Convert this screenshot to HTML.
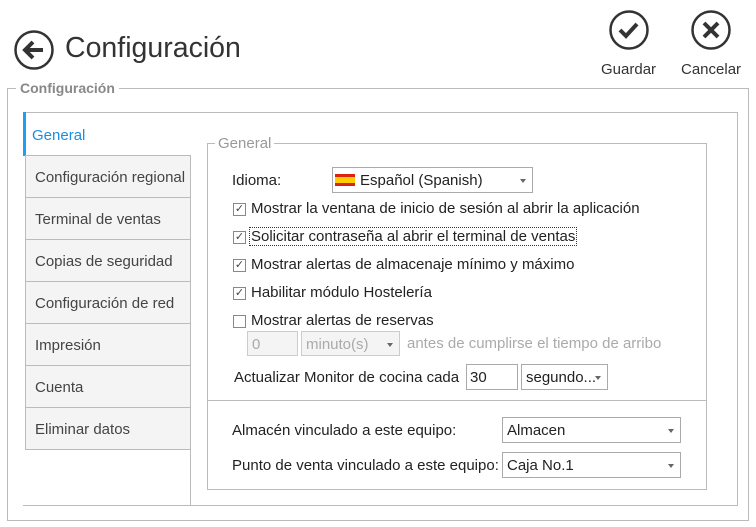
<!DOCTYPE html>
<html><head><meta charset="utf-8"><style>
*{box-sizing:border-box;margin:0;padding:0}
body{width:756px;height:527px;background:#fff;font-family:"Liberation Sans",sans-serif;color:#222;position:relative;overflow:hidden;font-size:15px}
.a{position:absolute}
.tab{position:absolute;left:25px;width:166px;height:43px;border:1px solid #bbb;background:#f4f4f4;color:#444;font-size:15px;padding:13px 0 0 9px;white-space:nowrap}
.cb{position:absolute;width:13px;height:13px;border:1px solid #888;background:#fff;font-size:11px;line-height:11px;text-align:center;color:#444}
.lbl{position:absolute;font-size:15px;white-space:nowrap;color:#222}
.sel{position:absolute;border:1px solid #aaa;background:#fff;height:26px;font-size:15px;padding:4px 0 0 4px;white-space:nowrap}
.sel:after{content:"";position:absolute;right:6px;top:11px;border-left:3px solid transparent;border-right:3px solid transparent;border-top:4px solid #666}
</style></head><body>
<svg class="a" style="left:13px;top:29px" width="42" height="42" viewBox="0 0 42 42"><circle cx="21" cy="21" r="18.5" fill="none" stroke="#333" stroke-width="2.5"/><path d="M30 21H12M20 13l-8 8 8 8" fill="none" stroke="#333" stroke-width="4"/></svg>
<div class="a" style="left:65px;top:32px;font-size:28.5px;color:#333">Configuración</div>
<svg class="a" style="left:608px;top:9px" width="42" height="42" viewBox="0 0 42 42"><circle cx="21" cy="21" r="18.5" fill="none" stroke="#333" stroke-width="2.5"/><path d="M12 21l6 6 11-12" fill="none" stroke="#333" stroke-width="4"/></svg>
<svg class="a" style="left:690px;top:9px" width="42" height="42" viewBox="0 0 42 42"><circle cx="21" cy="21" r="18.5" fill="none" stroke="#333" stroke-width="2.5"/><path d="M14 14l14 14M28 14L14 28" fill="none" stroke="#333" stroke-width="4"/></svg>
<div class="a" style="left:601px;top:61px;font-size:15px;color:#333">Guardar</div>
<div class="a" style="left:681px;top:61px;font-size:15px;color:#333">Cancelar</div>
<div class="a" style="left:7px;top:88px;width:742px;height:433px;border:1px solid #bbb"></div>
<div class="a" style="left:16px;top:80px;background:#fff;padding:0 4px;font-weight:bold;color:#888;font-size:14px">Configuración</div>
<div class="a" style="left:23px;top:112px;width:715px;height:394px;border:1px solid #bbb;border-left:none"></div>
<div class="a" style="left:23px;top:112px;width:3px;height:44px;background:#1ea0f0"></div>
<div class="a" style="left:32px;top:127px;color:#1a8fe0;font-size:15px">General</div>
<div class="a" style="left:190px;top:155px;width:1px;height:351px;background:#bbb"></div>
<div class="tab" style="top:155px">Configuración regional</div>
<div class="tab" style="top:197px">Terminal de ventas</div>
<div class="tab" style="top:239px">Copias de seguridad</div>
<div class="tab" style="top:281px">Configuración de red</div>
<div class="tab" style="top:323px">Impresión</div>
<div class="tab" style="top:365px">Cuenta</div>
<div class="tab" style="top:407px">Eliminar datos</div>
<div class="a" style="left:207px;top:143px;width:500px;height:347px;border:1px solid #bbb"></div>
<div class="a" style="left:207px;top:400px;width:500px;height:1px;background:#bbb"></div>
<div class="a" style="left:215px;top:135px;background:#fff;padding:0 3px;color:#999;font-size:15px">General</div>
<div class="lbl" style="left:232px;top:172px">Idioma:</div>
<div class="sel" style="left:332px;top:167px;width:201px;padding-left:27px">Español (Spanish)</div>
<div class="a" style="left:335px;top:174px;width:20px;height:12px;background:#d21;"><div style="margin-top:3px;height:6px;background:#fc0"></div></div>
<div class="cb" style="left:233px;top:203px">✓</div><div class="lbl" style="left:251px;top:200px">Mostrar la ventana de inicio de sesión al abrir la aplicación</div>
<div class="cb" style="left:233px;top:231px">✓</div><div class="lbl" style="left:250px;top:228px;outline:1px dotted #333;padding:0 1px">Solicitar contraseña al abrir el terminal de ventas</div>
<div class="cb" style="left:233px;top:259px">✓</div><div class="lbl" style="left:251px;top:256px">Mostrar alertas de almacenaje mínimo y máximo</div>
<div class="cb" style="left:233px;top:287px">✓</div><div class="lbl" style="left:251px;top:284px">Habilitar módulo Hostelería</div>
<div class="cb" style="left:233px;top:315px"></div><div class="lbl" style="left:251px;top:312px">Mostrar alertas de reservas</div>
<div class="a" style="left:247px;top:331px;width:51px;height:25px;border:1px solid #ccc;background:#f4f4f4;color:#aaa;padding:4px 4px">0</div>
<div class="sel" style="left:301px;top:331px;width:99px;height:25px;border-color:#ccc;background:#f4f4f4;color:#aaa">minuto(s)</div>
<div class="lbl" style="left:407px;top:335px;color:#aaa">antes de cumplirse el tiempo de arribo</div>
<div class="lbl" style="left:234px;top:369px">Actualizar Monitor de cocina cada</div>
<div class="a" style="left:466px;top:364px;width:52px;height:26px;border:1px solid #aaa;padding:4px 3px">30</div>
<div class="sel" style="left:521px;top:364px;width:87px">segundo...</div>
<div class="lbl" style="left:232px;top:422px">Almacén vinculado a este equipo:</div>
<div class="sel" style="left:502px;top:417px;width:179px">Almacen</div>
<div class="lbl" style="left:232px;top:457px">Punto de venta vinculado a este equipo:</div>
<div class="sel" style="left:502px;top:452px;width:179px">Caja No.1</div>
</body></html>
